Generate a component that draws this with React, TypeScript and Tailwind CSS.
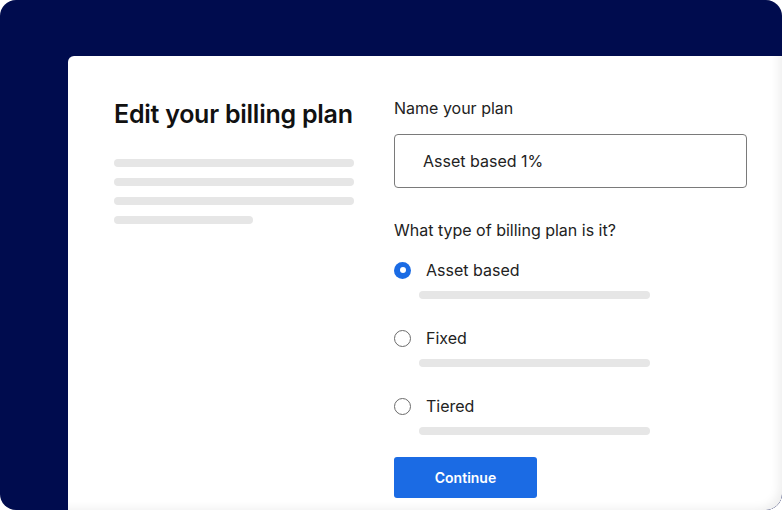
export default function App() {
  const options = [
    { label: 'Asset based', checked: true },
    { label: 'Fixed', checked: false },
    { label: 'Tiered', checked: false },
  ]

  return (
    <div className="w-[782px] h-[510px] bg-white" style={{ fontFamily: 'Inter, "Noto Sans", sans-serif' }}>
      <div className="w-full h-full flex flex-col pl-[68px] pt-[56px] bg-[#000c4e] rounded-[16px] overflow-hidden">
        <div className="flex-1 flex bg-white rounded-tl-[6px] rounded-br-[16px] pt-[40px] pl-[46px] shadow-[inset_-9px_-7px_10px_-6px_rgba(0,0,0,0.07)]">
          {/* Left column */}
          <div className="w-[240px] flex flex-col">
            <h1 className="pt-[2px] text-[25px] leading-[32px] font-semibold text-[#111] tracking-[-0.01em]">Edit your billing plan</h1>
            <div className="mt-[29px] flex flex-col gap-[11px]">
              <div className="h-[8px] w-[240px] rounded-full bg-[#e6e6e6]" />
              <div className="h-[8px] w-[240px] rounded-full bg-[#e6e6e6]" />
              <div className="h-[8px] w-[240px] rounded-full bg-[#e6e6e6]" />
              <div className="h-[8px] w-[139px] rounded-full bg-[#e6e6e6]" />
            </div>
          </div>

          {/* Right column */}
          <div className="ml-[40px] w-[353px] flex flex-col">
            <label className="text-[16px] leading-[24px] text-[#222]">Name your plan</label>
            <div className="mt-[14px] h-[54px] border border-[#7a7a7a] rounded-[4px] flex items-center pl-[28px] text-[16px] text-[#222]">
              Asset based 1%
            </div>
            <p className="mt-[30px] text-[16px] leading-[24px] text-[#222]">What type of billing plan is it?</p>
            <div className="mt-[16px] flex flex-col">
              {options.map((o, i) => (
                <div key={o.label} className={i > 0 ? 'mt-[27px]' : ''}>
                  <div className="flex items-center h-[24px]">
                    {o.checked ? (
                      <span className="w-[17px] h-[17px] rounded-full bg-[#1a6be4] flex items-center justify-center">
                        <span className="w-[6px] h-[6px] rounded-full bg-white" />
                      </span>
                    ) : (
                      <span className="w-[17px] h-[17px] rounded-full border-[1.5px] border-[#6b6b6b]" />
                    )}
                    <span className="ml-[15px] text-[16px] text-[#222]">{o.label}</span>
                  </div>
                  <div className="mt-[9px] ml-[25px] h-[8px] w-[231px] rounded-full bg-[#e6e6e6]" />
                </div>
              ))}
            </div>
            <button className="mt-[22px] w-[143px] h-[41px] rounded-[3px] bg-[#1b6be4] text-white text-[14px] font-semibold">
              Continue
            </button>
          </div>
        </div>
      </div>
    </div>
  )
}
